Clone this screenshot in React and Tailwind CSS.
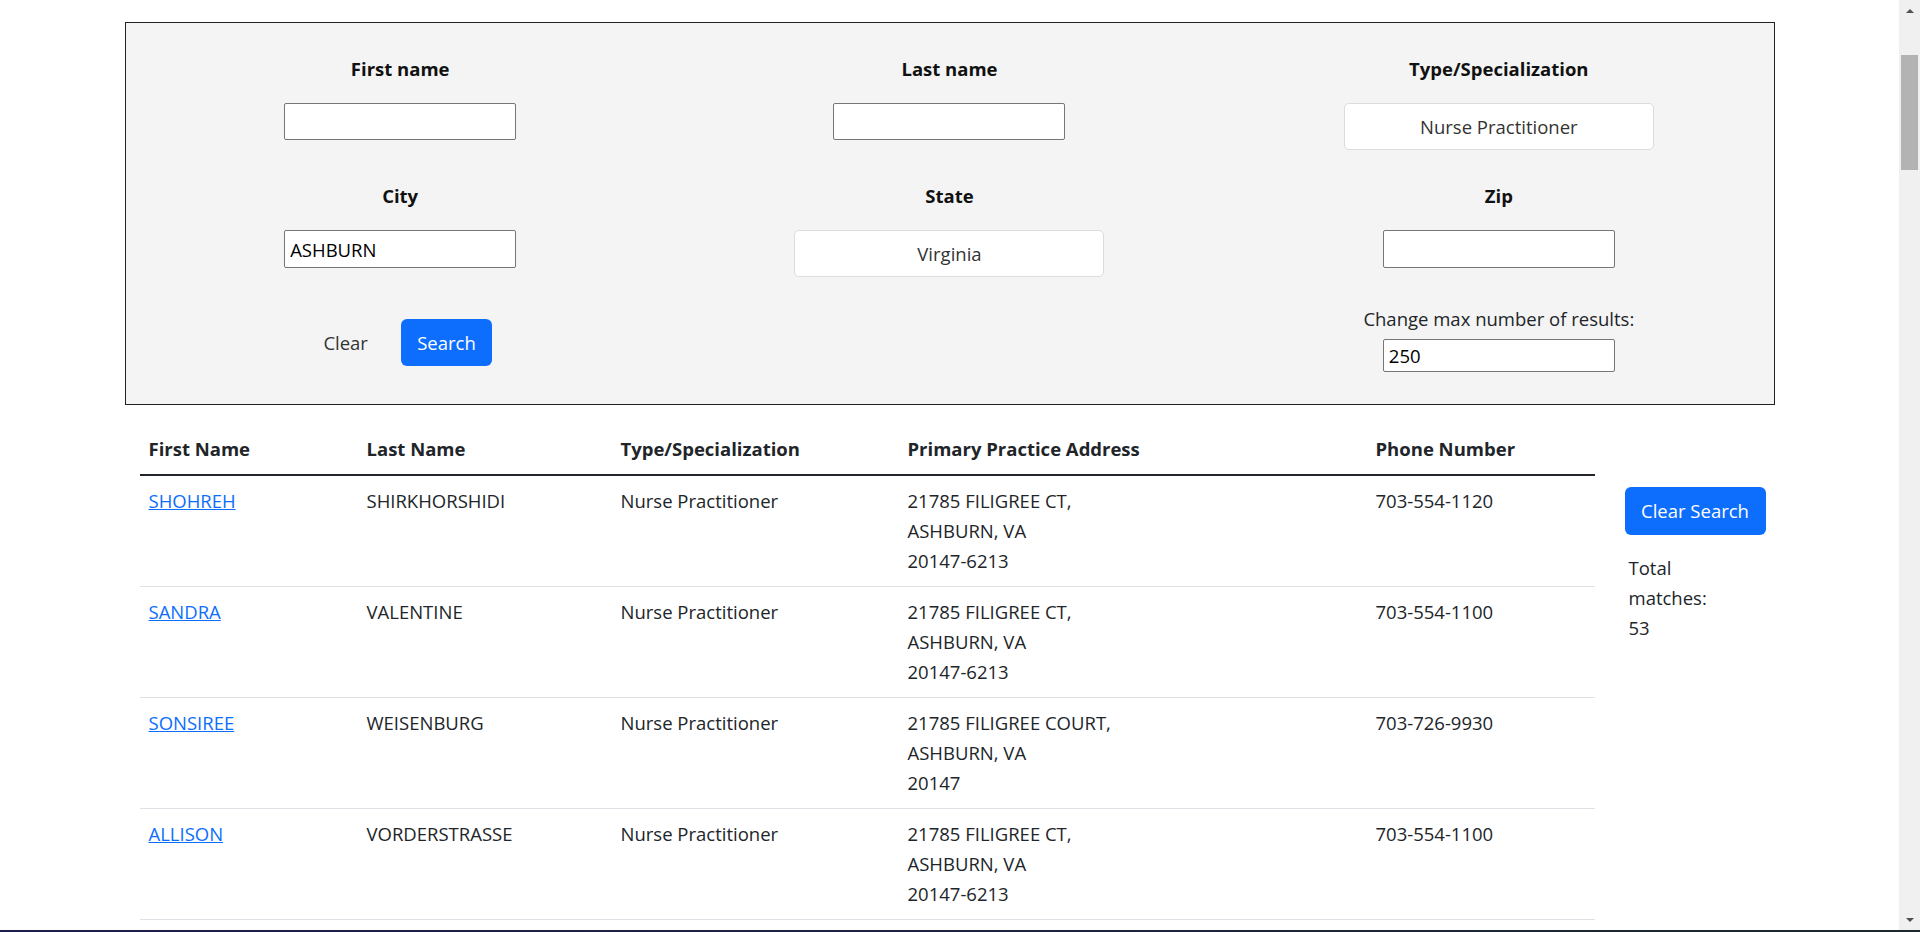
import React from "react";

const rows = [
  { first: "SHOHREH", last: "SHIRKHORSHIDI", addr: ["21785 FILIGREE CT,", "ASHBURN, VA", "20147-6213"], phone: "703-554-1120" },
  { first: "SANDRA", last: "VALENTINE", addr: ["21785 FILIGREE CT,", "ASHBURN, VA", "20147-6213"], phone: "703-554-1100" },
  { first: "SONSIREE", last: "WEISENBURG", addr: ["21785 FILIGREE COURT,", "ASHBURN, VA", "20147"], phone: "703-726-9930" },
  { first: "ALLISON", last: "VORDERSTRASSE", addr: ["21785 FILIGREE CT,", "ASHBURN, VA", "20147-6213"], phone: "703-554-1100" },
];

function Label({ children }) {
  return <div className="h-[30px] leading-[30px] font-bold text-[#111]">{children}</div>;
}

function TextInput({ value = "", className = "" }) {
  return (
    <input
      readOnly
      value={value}
      className={"w-[232px] bg-white border border-[#767676] rounded-[2px] px-[5px] text-[18.5px] text-black outline-none " + className}
    />
  );
}

function Select({ value }) {
  return (
    <div className="w-[310px] h-[47px] bg-white border border-[#dcdcdc] rounded-[5px] flex items-center justify-center text-[#333]">
      {value}
    </div>
  );
}

export default function App() {
  return (
    <div className="h-[932px] w-full flex flex-col overflow-hidden bg-white font-['Open_Sans',sans-serif] text-[18.5px] leading-[30px] text-[#212529]">
      <div className="flex-1 flex min-h-0">
        <div className="flex-1 min-w-0 overflow-hidden">
          <div className="w-[1650px] mx-auto">
            {/* Search panel */}
            <div className="mt-[22px] border border-[#222] bg-[#f4f4f4] pt-[31px] pb-[32px]">
              <div className="grid grid-cols-3 items-start">
                <div className="flex flex-col items-center">
                  <Label>First name</Label>
                  <TextInput className="mt-[19px] h-[37px]" />
                </div>
                <div className="flex flex-col items-center">
                  <Label>Last name</Label>
                  <TextInput className="mt-[19px] h-[37px]" />
                </div>
                <div className="flex flex-col items-center">
                  <Label>Type/Specialization</Label>
                  <div className="mt-[19px]">
                    <Select value="Nurse Practitioner" />
                  </div>
                </div>
              </div>
              <div className="grid grid-cols-3 items-start mt-[31px]">
                <div className="flex flex-col items-center">
                  <Label>City</Label>
                  <TextInput value="ASHBURN" className="mt-[19px] h-[38px]" />
                </div>
                <div className="flex flex-col items-center">
                  <Label>State</Label>
                  <div className="mt-[19px]">
                    <Select value="Virginia" />
                  </div>
                </div>
                <div className="flex flex-col items-center">
                  <Label>Zip</Label>
                  <TextInput className="mt-[19px] h-[38px]" />
                </div>
              </div>
              <div className="grid grid-cols-3 items-start mt-[27px]">
                <div className="flex justify-center items-center gap-[18px] mt-[15px]">
                  <button className="h-[47px] px-[15px] text-[#333] bg-transparent">Clear</button>
                  <button className="h-[47px] w-[91px] rounded-[6px] bg-[#0d6efd] text-white">Search</button>
                </div>
                <div />
                <div className="flex flex-col items-center">
                  <div className="h-[30px] leading-[30px] text-[#212529]">Change max number of results:</div>
                  <TextInput value="250" className="mt-[5px] h-[33px] px-[3px]" />
                </div>
              </div>
            </div>

            {/* Results */}
            <div className="flex px-[15px] mt-[19px] gap-[30px]">
              <table className="w-[1455px] table-fixed border-collapse">
                <colgroup>
                  <col className="w-[218px]" />
                  <col className="w-[254px]" />
                  <col className="w-[287px]" />
                  <col className="w-[468px]" />
                  <col className="w-[228px]" />
                </colgroup>
                <thead>
                  <tr className="border-b-2 border-[#212529]">
                    <th className="text-left font-bold px-[9px] py-[10px]">First Name</th>
                    <th className="text-left font-bold px-[9px] py-[10px]">Last Name</th>
                    <th className="text-left font-bold px-[9px] py-[10px]">Type/Specialization</th>
                    <th className="text-left font-bold px-[9px] py-[10px]">Primary Practice Address</th>
                    <th className="text-left font-bold px-[9px] py-[10px]">Phone Number</th>
                  </tr>
                </thead>
                <tbody>
                  {rows.map((r, i) => (
                    <tr key={i} className="border-b border-[#dee2e6] align-top">
                      <td className="px-[9px] py-[10px]">
                        <a href="#" className="text-[#0d6efd] underline">{r.first}</a>
                      </td>
                      <td className="px-[9px] py-[10px]">{r.last}</td>
                      <td className="px-[9px] py-[10px]">Nurse Practitioner</td>
                      <td className="px-[9px] py-[10px]">
                        {r.addr.map((l, j) => (
                          <div key={j}>{l}</div>
                        ))}
                      </td>
                      <td className="px-[9px] py-[10px]">{r.phone}</td>
                    </tr>
                  ))}
                </tbody>
              </table>
              <div className="pt-[63px] flex flex-col">
                <button className="w-[141px] h-[48px] rounded-[6px] bg-[#0d6efd] text-white">Clear Search</button>
                <div className="mt-[18px] pl-[4px]">
                  <div>Total</div>
                  <div>matches:</div>
                  <div>53</div>
                </div>
              </div>
            </div>
          </div>
        </div>

        {/* Scrollbar */}
        <div className="w-[21px] bg-[#f0f0f0] flex flex-col">
          <div className="h-[21px] flex items-center justify-center">
            <div className="w-0 h-0 border-x-[4px] border-x-transparent border-b-[4px] border-b-[#505050]" />
          </div>
          <div className="flex-1 px-[2px]">
            <div className="mt-[34px] h-[115px] bg-[#b3b3b3]" />
          </div>
          <div className="h-[21px] flex items-center justify-center">
            <div className="w-0 h-0 border-x-[4px] border-x-transparent border-t-[4px] border-t-[#505050]" />
          </div>
        </div>
      </div>
      <div className="h-[2px] w-full bg-gradient-to-r from-[#1c1c4e] via-[#1d2440] to-[#1a2a2e]" />
    </div>
  );
}
